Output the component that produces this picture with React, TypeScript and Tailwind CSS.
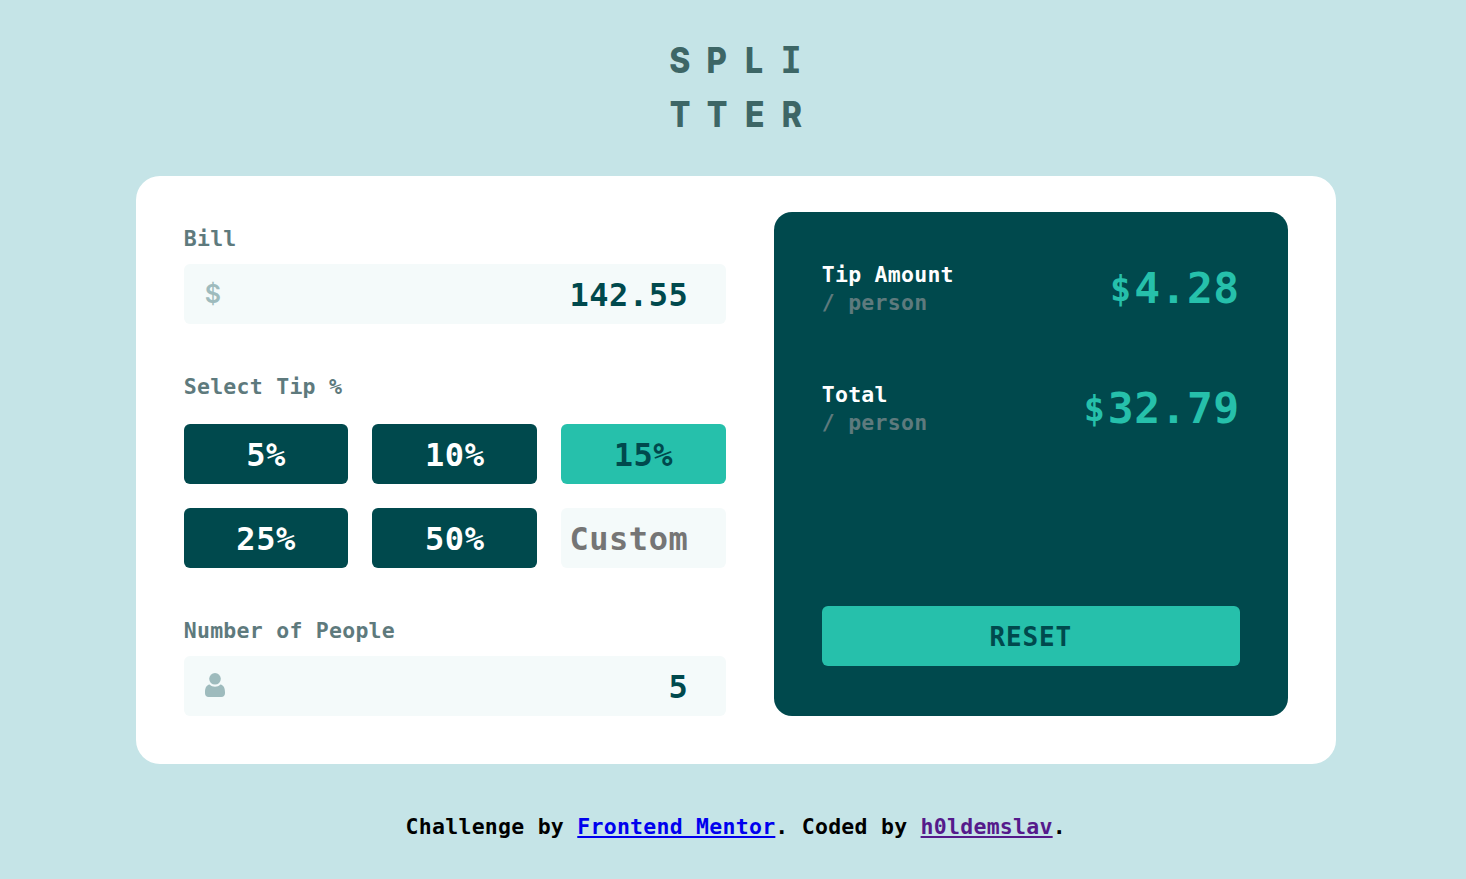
import { useState } from "react";

const TIPS = [5, 10, 15, 25, 50];

const FIELD =
  "block h-[60px] w-full min-w-0 rounded-md bg-[#f4fafa] pt-px pr-[37.500px] text-right text-[32px] tracking-[0.54px] text-[#00494d] outline-none placeholder:text-[#757575] placeholder:opacity-100";

const LETTERS = [
  { char: "S", style: "scale-x-[0.900]" },
  { char: "P", style: "scale-x-[0.880]" },
  { char: "L", style: "scale-x-[0.900]" },
  { char: "I", style: "pt-[3px] pr-px scale-x-[0.860] font-['Liberation_Mono',monospace] text-[40px]" },
  { char: "T", style: "scale-x-[0.860]" },
  { char: "T", style: "scale-x-[0.860]" },
  { char: "E", style: "scale-x-[0.900]" },
  { char: "R", style: "scale-x-[0.860]" },
];

function Logo() {
  return (
    <h1 className="grid grid-cols-4 font-['Inter',sans-serif] text-[35.500px] leading-[54px] font-extrabold text-[#3d6666]">
      {LETTERS.map((letter, i) => (
        <span key={i} className="flex h-[54px] w-[37.400px] items-center justify-center">
          <span className={letter.style}>{letter.char}</span>
        </span>
      ))}
    </h1>
  );
}

function PersonIcon() {
  return (
    <svg width="20" height="24" viewBox="0 0 20 24" fill="#9ebbbd">
      <circle cx="10" cy="5.8" r="5.8" />
      <path d="M4.600 11.600C6 13 7.900 13.800 10 13.800s4-.8 5.400-2.200C18.800 12.100 20 15.500 20 19.300v1C20 22.600 18.600 24 16.300 24H3.700C1.400 24 0 22.600 0 20.300v-1C0 15.500 1.200 12.100 4.600 11.600Z" />
    </svg>
  );
}

function Result({ label, value }: { label: string; value: string }) {
  return (
    <div className="flex h-14 items-center justify-between">
      <div className="pt-[2px] text-[21.500px] leading-7 tracking-[0.26px]">
        <div className="text-white">{label}</div>
        <div className="text-[#5e7a7d]">/ person</div>
      </div>
      <div className="flex items-center text-[#26c0ab]">
        <span className="mr-[3px] pt-[2px] text-[35px] leading-[56px]">$</span>
        <span className="text-[43px] leading-[56px] tracking-[0.500px]">{value}</span>
      </div>
    </div>
  );
}

export default function App() {
  const [bill, setBill] = useState("142.55");
  const [people, setPeople] = useState("5");
  const [tip, setTip] = useState(15);
  const [custom, setCustom] = useState("");

  const count = Number(people) || 1;
  const rate = custom ? Number(custom) : tip;
  const tipEach = ((Number(bill) || 0) * rate) / 100 / count;
  const totalEach = (Number(bill) || 0) / count + tipEach;

  const reset = () => {
    setBill("");
    setPeople("");
    setTip(0);
    setCustom("");
  };

  return (
    <div className="flex min-h-[879px] flex-col items-center bg-[#c5e4e7] pl-[5.500px] font-['DejaVu_Sans_Mono',monospace] font-bold">
      <header className="pt-[34px]">
        <Logo />
      </header>

      <main className="mt-[34px] flex h-[588px] w-[1200px] gap-12 rounded-3xl bg-white px-12 pt-9 pb-12">
        <section className="flex w-[542px] flex-col text-[21.500px] leading-7 tracking-[0.26px] text-[#5e7a7d]">
          <label htmlFor="bill" className="mt-[13px] mb-[11px]">Bill</label>
          <div className="relative">
            <span className="absolute top-0 left-[21px] font-['Inter',sans-serif] text-[25px] leading-[60px] font-semibold text-[#9ebbbd]">$</span>
            <input id="bill" className={FIELD} value={bill} onChange={(e) => setBill(e.target.value)} />
          </div>

          <div className="mt-[49px] mb-[23px]">Select Tip %</div>
          <div className="grid grid-cols-3 gap-6">
            {TIPS.map((t) => (
              <button
                key={t}
                onClick={() => setTip(t)}
                className={
                  t === tip
                    ? "h-[60px] rounded-md bg-[#26c0ab] pt-px text-[32px] tracking-[0.54px] text-[#00494d]"
                    : "h-[60px] rounded-md bg-[#00494d] pt-px text-[32px] tracking-[0.54px] text-white"
                }
              >
                {t}%
              </button>
            ))}
            <input className={FIELD} placeholder="Custom" value={custom} onChange={(e) => setCustom(e.target.value)} />
          </div>

          <label htmlFor="people" className="mt-[49px] mb-[11px]">Number of People</label>
          <div className="relative">
            <span className="absolute top-[17px] left-[21px]">
              <PersonIcon />
            </span>
            <input id="people" className={FIELD} value={people} onChange={(e) => setPeople(e.target.value)} />
          </div>
        </section>

        <section className="flex flex-1 flex-col rounded-[18px] bg-[#00494d] px-12 pt-12 pb-[50px]">
          <div className="flex flex-col gap-16">
            <Result label="Tip Amount" value={tipEach.toFixed(2)} />
            <Result label="Total" value={totalEach.toFixed(2)} />
          </div>
          <button onClick={reset} className="mt-auto h-[60px] rounded-md bg-[#26c0ab] pt-[2px] text-[26px] tracking-[0.850px] text-[#00494d]">
            RESET
          </button>
        </section>
      </main>

      <footer className="mt-[49px] text-[21.500px] leading-7 tracking-[0.26px] text-black">
        Challenge by{" "}
        <a href="#" className="text-[#0000ee] underline">Frontend Mentor</a>. Coded by{" "}
        <a href="#" className="text-[#551a8b] underline">h0ldemslav</a>.
      </footer>
    </div>
  );
}
